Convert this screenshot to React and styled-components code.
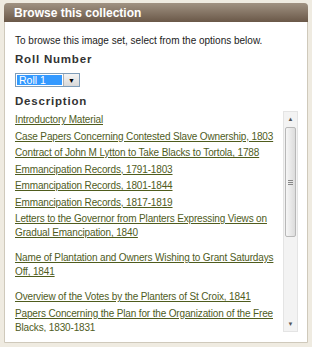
import styled, { createGlobalStyle } from "styled-components";

const GlobalStyle = createGlobalStyle`
  body {
    margin: 0;
    background: #efebe1;
    font-family: "Liberation Sans", Arial, sans-serif;
  }
`;

const Frame = styled.div`
  width: 312px;
  height: 347px;
  padding: 3px 4px 4px 4px;
  box-sizing: border-box;
`;

const Panel = styled.div`
  height: 100%;
  box-sizing: border-box;
  background: #fff;
  border: 1px solid #cfc9bb;
  border-radius: 4px 4px 0 0;
  display: flex;
  flex-direction: column;
`;

const Header = styled.div`
  height: 19px;
  margin: -1px -1px 0 -1px;
  padding-left: 10px;
  display: flex;
  align-items: center;
  background: linear-gradient(#a09282, #6a5848);
  border-radius: 4px 4px 0 0;
  color: #fff;
  font-weight: bold;
  font-size: 12px;
`;

const Body = styled.div`
  flex: 1;
  min-height: 0;
  padding: 12px 9px 10px 10px;
  display: flex;
  flex-direction: column;
  color: #222;
`;

const Intro = styled.p`
  margin: 0 0 3px 0;
  font-size: 10px;
  line-height: 14px;
`;

const Label = styled.h3`
  margin: 0;
  font-size: 11.5px;
  letter-spacing: 0.8px;
  font-weight: bold;
  color: #333;
  line-height: 16px;
`;

const Select = styled.div`
  display: flex;
  width: 65px;
  height: 14px;
  margin: 6px 0 6px 0;
  border: 1px solid #7f9db9;
  box-sizing: border-box;
  background: #fff;
`;

const Selected = styled.span`
  flex: 1;
  margin: 1px;
  padding-left: 2px;
  background: #3399ff;
  color: #fff;
  font-size: 10.5px;
  line-height: 10px;
`;

const DropButton = styled.span`
  width: 15px;
  display: flex;
  align-items: center;
  justify-content: center;
  background: linear-gradient(#f4f4f4, #d8d8d8);
  border-left: 1px solid #b0b0b0;
  font-size: 7px;
  color: #000;
`;

const ListWrap = styled.div`
  flex: 1;
  min-height: 0;
  margin-top: 2px;
  display: flex;
  gap: 1px;
`;

const List = styled.div`
  flex: 1;
  overflow: hidden;
  padding-top: 2px;
`;

const Item = styled.a`
  display: block;
  color: #4f5c1d;
  font-size: 10px;
  letter-spacing: -0.15px;
  line-height: 14px;
  margin-bottom: ${(p) => (p.$gap ? "11px" : "2.5px")};
  text-decoration: underline;
  cursor: pointer;
`;

const Scrollbar = styled.div`
  width: 15px;
  display: flex;
  flex-direction: column;
  background: #f3f3f3;
  border: 1px solid #e4e4e4;
  box-sizing: border-box;
`;

const Arrow = styled.div`
  height: 14px;
  display: flex;
  align-items: center;
  justify-content: center;
  font-size: 6px;
  color: #555;
`;

const Thumb = styled.div`
  height: 108px;
  margin: 1px 1px 0 1px;
  border: 1px solid #b8b8b8;
  border-radius: 2px;
  background: linear-gradient(90deg, #f6f6f6, #dcdcdc);
  display: flex;
  align-items: center;
  justify-content: center;
`;

const Grip = styled.div`
  width: 5px;
  height: 5px;
  background: repeating-linear-gradient(#888 0 1px, transparent 1px 2px);
`;

const Track = styled.div`
  flex: 1;
`;

const items = [
  { t: "Introductory Material" },
  { t: "Case Papers Concerning Contested Slave Ownership, 1803" },
  { t: "Contract of John M Lytton to Take Blacks to Tortola, 1788" },
  { t: "Emmancipation Records, 1791-1803" },
  { t: "Emmancipation Records, 1801-1844" },
  { t: "Emmancipation Records, 1817-1819" },
  { t: "Letters to the Governor from Planters Expressing Views on Gradual Emancipation, 1840", gap: true },
  { t: "Name of Plantation and Owners Wishing to Grant Saturdays Off, 1841", gap: true },
  { t: "Overview of the Votes by the Planters of St Croix, 1841" },
  { t: "Papers Concerning the Plan for the Organization of the Free Blacks, 1830-1831" },
];

export default function App() {
  return (
    <>
      <GlobalStyle />
      <Frame>
        <Panel>
          <Header>Browse this collection</Header>
          <Body>
            <Intro>To browse this image set, select from the options below.</Intro>
            <Label>Roll Number</Label>
            <Select>
              <Selected>Roll 1</Selected>
              <DropButton>▼</DropButton>
            </Select>
            <Label>Description</Label>
            <ListWrap>
              <List>
                {items.map((it) => (
                  <Item key={it.t} $gap={it.gap}>
                    {it.t}
                  </Item>
                ))}
              </List>
              <Scrollbar>
                <Arrow>▲</Arrow>
                <Thumb>
                  <Grip />
                </Thumb>
                <Track />
                <Arrow>▼</Arrow>
              </Scrollbar>
            </ListWrap>
          </Body>
        </Panel>
      </Frame>
    </>
  );
}
